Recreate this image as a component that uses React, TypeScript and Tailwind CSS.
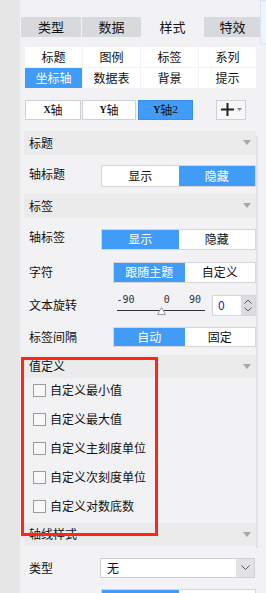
import React from 'react';

const BLUE = 'bg-[#409cf6]';

function Toggle({ left, right, active, w, h = 'h-[22px]' }: { left: string; right: string; active: 0 | 1; w: string; h?: string }) {
    return (
        <div className={`flex ${w} ${h} border border-[#d6d6da] bg-white text-[12px]`}>
            <div className={`flex-1 flex items-center justify-center ${active === 0 ? `${BLUE} text-white` : 'text-[#111]'}`}>{left}</div>
            <div className={`flex-1 flex items-center justify-center ${active === 1 ? `${BLUE} text-white` : 'text-[#111]'}`}>{right}</div>
        </div>
    );
}

function Header({ title, h = 'h-[24px]' }: { title: string; h?: string }) {
    return (
        <div className={`flex items-center justify-between ${h} bg-[#ebebec] pl-[5px] pr-[5px] text-[12px] text-[#111]`}>
            <span>{title}</span>
            <svg width="8" height="5" viewBox="0 0 8 5">
                <path d="M0 0 L8 0 L4 5 Z" fill="#a8a8a8" />
            </svg>
        </div>
    );
}

function Check({ label }: { label: string }) {
    return (
        <div className="flex items-center h-[13px] pl-[9px] gap-[4px]">
            <div className="w-[13px] h-[13px] border border-[#9c9c9c] bg-[#f8f8f8]" />
            <span className="text-[12px] text-[#111] leading-none">{label}</span>
        </div>
    );
}

export default function App() {
    const subTabs = ['标题', '图例', '标签', '系列', '坐标轴', '数据表', '背景', '提示'];

    return (
        <div className="flex w-[266px] h-[593px] overflow-hidden font-['Noto_Sans_CJK_SC','Noto_Sans',sans-serif] text-[#111] relative">
            {/* left strip */}
            <div className="w-[20px] h-full bg-[#e6e6e7] shrink-0" />

            {/* main panel */}
            <div className="flex-1 bg-[#f2f2f4] flex flex-col">
                {/* top tabs */}
                <div className="mt-[17px] ml-[1px] flex h-[25px] text-[13px]">
                    <div className="w-[60px] bg-[#d8d9dc] flex items-center justify-center">类型</div>
                    <div className="w-[59px] ml-[1px] bg-[#d8d9dc] flex items-center justify-center">数据</div>
                    <div className="w-[63px] bg-[#f2f2f4] flex items-center justify-center">样式</div>
                    <div className="w-[57px] bg-[#d8d9dc] flex items-center justify-center">特效</div>
                </div>

                {/* sub tabs */}
                <div className="mt-[10px] ml-[5px] w-[231px] grid grid-cols-4 gap-px text-[12px]">
                    {subTabs.map((t) => (
                        <div
                            key={t}
                            className={`h-[20px] flex items-center justify-center ${t === '坐标轴' ? `${BLUE} text-white` : 'bg-white text-[#111]'}`}
                        >
                            {t}
                        </div>
                    ))}
                </div>

                {/* axis buttons */}
                <div className="mt-[12px] ml-[5px] flex items-center h-[20px] text-[12px]">
                    <div className="w-[56px] h-[20px] border border-[#d0d0d4] bg-white flex items-center justify-center">
                        <span className="font-['Liberation_Serif',serif] text-[10px] font-bold">X</span>轴
                    </div>
                    <div className="w-[54px] h-[20px] ml-[1px] border border-[#d0d0d4] bg-white flex items-center justify-center">
                        <span className="font-['Liberation_Serif',serif] text-[10px] font-bold">Y</span>轴
                    </div>
                    <div className={`w-[55px] h-[20px] ml-[2px] border border-[#3a8fe4] ${BLUE} flex items-center justify-center text-[#111]`}>
                        <span className="font-['Liberation_Serif',serif] text-[10px] font-bold">Y</span>轴
                        <span className="font-['Liberation_Serif',serif] text-[11px]">2</span>
                    </div>
                    <div className="w-[30px] h-[20px] ml-[23px] border border-[#d0d0d4] bg-[#f8f8f9] flex items-center justify-center gap-[3px]">
                        <svg width="13" height="13" viewBox="0 0 13 13">
                            <path d="M0 6.5 H13 M6.5 0 V13" stroke="#222" strokeWidth="2" />
                        </svg>
                        <svg width="5" height="3" viewBox="0 0 5 3">
                            <path d="M0 0 L5 0 L2.5 3 Z" fill="#8a8a8a" />
                        </svg>
                    </div>
                </div>

                {/* sections */}
                <div className="mt-[11px] ml-[4px] w-[232px] flex flex-col">
                    <Header title="标题" />
                    <div className="mt-[10px] flex items-center justify-between">
                        <span className="pl-[5px] text-[12px] mb-[5px]">轴标题</span>
                        <Toggle left="显示" right="隐藏" active={1} w="w-[155px]" />
                    </div>

                    <div className="mt-[6px]">
                        <Header title="标签" />
                    </div>
                    <div className="mt-[10px] flex items-center justify-between">
                        <span className="pl-[5px] text-[12px] mb-[5px]">轴标签</span>
                        <Toggle left="显示" right="隐藏" active={0} w="w-[155px]" h="h-[21px]" />
                    </div>
                    <div className="mt-[11px] flex items-center justify-between">
                        <span className="pl-[5px] text-[12px]">字符</span>
                        <Toggle left="跟随主题" right="自定义" active={0} w="w-[143px]" h="h-[21px]" />
                    </div>

                    {/* rotation */}
                    <div className="mt-[12px] flex items-center h-[21px]">
                        <span className="pl-[5px] text-[12px] w-[93px]">文本旋转</span>
                        <div className="w-[89px] h-[21px] flex flex-col">
                            <div className="flex justify-between text-[10px] leading-none h-[10px] text-[#333] font-['DejaVu_Sans_Mono',monospace]">
                                <span>-90</span>
                                <span className="ml-[10px]">0</span>
                                <span className="mr-[4px]">90</span>
                            </div>
                            <div className="relative h-[11px]">
                                <div className="mt-[5px] h-px bg-[#333]" />
                                <svg className="absolute left-[40px] top-[2px]" width="9" height="8" viewBox="0 0 9 8">
                                    <path d="M4.5 0.5 L8.5 7.5 L0.5 7.5 Z" fill="#fff" stroke="#9a9a9a" />
                                </svg>
                            </div>
                        </div>
                        <div className="ml-[7px] flex h-[21px] border border-[#d6d6da]">
                            <div className="w-[28px] bg-white flex items-center pl-[5px] text-[12px] text-[#1a2a9a]">0</div>
                            <div className="w-[14px] bg-[#dcdcde] flex flex-col items-center justify-center gap-[3px]">
                                <svg width="8" height="5" viewBox="0 0 8 5">
                                    <path d="M0.5 4.5 L4 1 L7.5 4.5" stroke="#555" fill="none" />
                                </svg>
                                <svg width="8" height="5" viewBox="0 0 8 5">
                                    <path d="M0.5 0.5 L4 4 L7.5 0.5" stroke="#555" fill="none" />
                                </svg>
                            </div>
                        </div>
                    </div>

                    <div className="mt-[11px] flex items-center justify-between">
                        <span className="pl-[5px] text-[12px]">标签间隔</span>
                        <Toggle left="自动" right="固定" active={0} w="w-[143px]" h="h-[20px]" />
                    </div>

                    <div className="mt-[8px]">
                        <Header title="值定义" h="h-[23px]" />
                    </div>
                    <div className="pt-[6px] flex flex-col gap-[16px]">
                        <Check label="自定义最小值" />
                        <Check label="自定义最大值" />
                        <Check label="自定义主刻度单位" />
                        <Check label="自定义次刻度单位" />
                        <Check label="自定义对数底数" />
                    </div>

                    <div className="mt-[10px]">
                        <Header title="轴线样式" h="h-[23px]" />
                    </div>
                    <div className="mt-[12px] flex items-center justify-between">
                        <span className="pl-[5px] text-[12px]">类型</span>
                        <div className="w-[155px] h-[20px] flex border border-[#d0d0d4] bg-white mr-[1px]">
                            <div className="flex-1 flex items-center pl-[6px] text-[12px]">无</div>
                            <div className="w-[18px] bg-[#e2e2e4] flex items-center justify-center">
                                <svg width="9" height="5" viewBox="0 0 9 5">
                                    <path d="M0.5 0.5 L4.5 4.5 L8.5 0.5" stroke="#555" fill="none" />
                                </svg>
                            </div>
                        </div>
                    </div>
                    <div className="mt-[11px] flex justify-end">
                        <Toggle left="" right="" active={0} w="w-[155px]" h="h-[20px]" />
                    </div>
                </div>
            </div>

            {/* scrollbar track */}
            <div className="absolute left-[256px] top-[136px] w-[2px] h-[412px] bg-[#e2e2e4]" />

            {/* popup edge at top-right */}
            <div className="absolute left-[260px] top-0 w-[10px] h-[45px] bg-[#edf5fb] border border-[#d4e6f4] rounded-bl-[3px]" />

            {/* red annotation box */}
            <div className="absolute left-[21px] top-[357px] w-[137px] h-[179px] border-[3px] border-[#ff2617]" />
        </div>
    );
}
